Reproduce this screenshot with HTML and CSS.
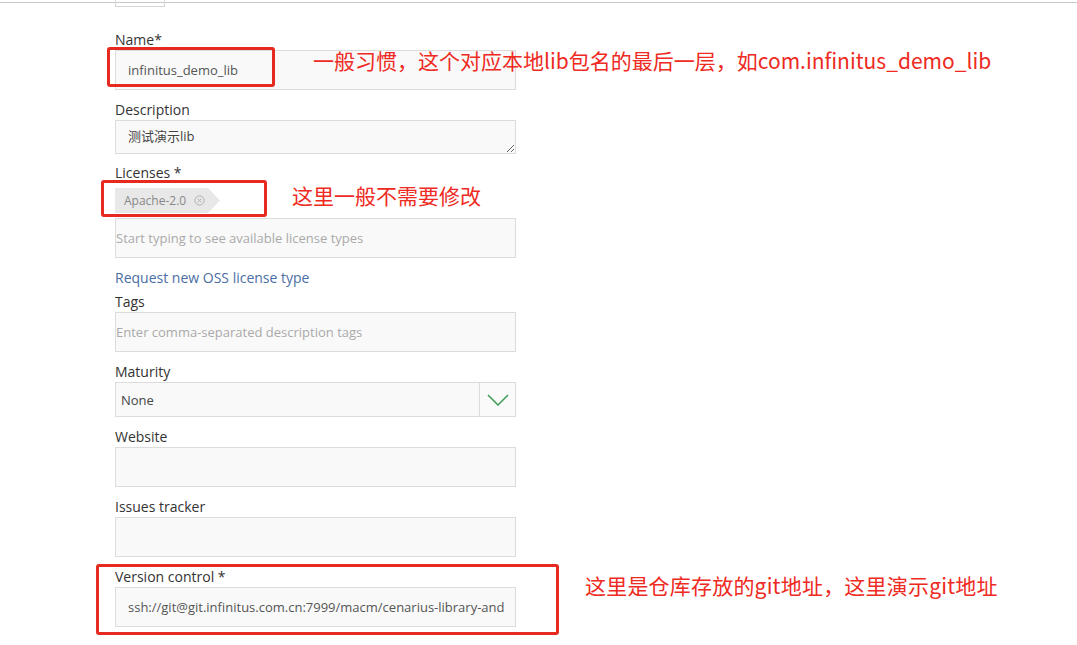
FILE: index.html
```html
<!DOCTYPE html>
<html lang="zh-CN">
<head>
<meta charset="utf-8">
<title>Create package</title>
<link rel="stylesheet" href="styles.css">
</head>
<body>
<div class="page">
  <div class="top"><div class="stub"></div></div>
  <form class="form">
    <div class="field">
      <label class="label">Name*</label>
      <div class="input input-text">infinitus_demo_lib</div>
    </div>
    <div class="field field-desc">
      <label class="label">Description</label>
      <textarea class="textarea" readonly>测试演示lib</textarea>
    </div>
    <div class="field field-lic">
      <label class="label">Licenses *</label>
      <div class="chip">Apache-2.0<span class="chip-x">
        <svg width="11" height="11" viewBox="0 0 11 11"><circle cx="5.5" cy="5.5" r="4.6" fill="none" stroke="#b0b0b0" stroke-width="1"/><path d="M3.6 3.6 L7.4 7.4 M7.4 3.6 L3.6 7.4" stroke="#b0b0b0" stroke-width="1"/></svg>
      </span></div>
      <div class="input input-ph flush">Start typing to see available license types</div>
      <a class="link" href="#">Request new OSS license type</a>
    </div>
    <div class="field">
      <label class="label">Tags</label>
      <div class="input input-ph flush1">Enter comma-separated description tags</div>
    </div>
    <div class="field">
      <label class="label">Maturity</label>
      <div class="select">
        <span class="select-val">None</span>
        <span class="select-btn">
          <svg width="22" height="12" viewBox="0 0 22 12"><path d="M1 1 L11 11 L21 1" fill="none" stroke="#3f9a55" stroke-width="1.5"/></svg>
        </span>
      </div>
    </div>
    <div class="field">
      <label class="label">Website</label>
      <div class="input"></div>
    </div>
    <div class="field">
      <label class="label">Issues tracker</label>
      <div class="input"></div>
    </div>
    <div class="field">
      <label class="label">Version control *</label>
      <div class="input input-text">ssh://git@git.infinitus.com.cn:7999/macm/cenarius-library-and</div>
    </div>
  </form>

  <div class="mark mark-1"></div>
  <div class="mark mark-2"></div>
  <div class="mark mark-3"></div>
  <div class="note note-1">一般习惯，这个对应本地lib包名的最后一层，如com.infinitus_demo_lib</div>
  <div class="note note-2">这里一般不需要修改</div>
  <div class="note note-3">这里是仓库存放的git地址，这里演示git地址</div>
</div>
</body>
</html>
```

FILE: styles.css
```css
* { box-sizing: border-box; }
html, body {
  margin: 0;
  padding: 0;
  background: #ffffff;
}
body {
  font-family: "Open Sans", "Noto Sans CJK SC", sans-serif;
  color: #333333;
  width: 1077px;
  height: 645px;
  overflow: hidden;
}
.page {
  position: relative;
  width: 1077px;
  height: 645px;
}
.top {
  height: 7px;
  background: linear-gradient(#ffffff 0, #ffffff 2px, #c9c9c9 2px, #c9c9c9 3px, #ffffff 3px);
}
.stub {
  margin-left: 115px;
  width: 50px;
  height: 7px;
  border: 1px solid #d6d6d6;
  border-top: none;
  background: transparent;
}
.form {
  margin: 23px 0 0 115px;
  width: 401px;
  display: flex;
  flex-direction: column;
  gap: 10px;
}
.field {
  display: flex;
  flex-direction: column;
}
.field-desc { margin-bottom: -1px; }
.label {
  display: block;
  height: 20px;
  line-height: 20px;
  font-size: 14px;
  color: #333;
}
.input {
  height: 40px;
  background: #f9f9f9;
  border: 1px solid #dcdcdc;
  font-size: 13px;
  line-height: 38px;
  padding-left: 12px;
  white-space: nowrap;
  overflow: hidden;
}
.input-text { color: #555; }
.input-ph { color: #aaaaaa; }
.flush { padding-left: 0; }
.flush1 { padding-left: 0; }
.textarea {
  display: block;
  width: 401px;
  height: 34px;
  background: #f9f9f9;
  border: 1px solid #dcdcdc;
  font-family: "Open Sans", "Noto Sans CJK SC", sans-serif;
  font-size: 13px;
  color: #444;
  padding: 5px 12px;
  line-height: 20px;
  resize: vertical;
  margin: 0;
  outline: none;
}
.chip {
  margin-top: 5px;
  margin-bottom: 5px;
  width: 105px;
  height: 25px;
  line-height: 25px;
  background: #e8e8e8;
  color: #888;
  font-size: 12px;
  padding-left: 9px;
  clip-path: polygon(0 0, 93px 0, 105px 50%, 93px 100%, 0 100%);
  display: flex;
  align-items: center;
  gap: 8px;
}
.chip-x { display: flex; align-items: center; }
.link {
  display: block;
  margin-top: 10px;
  height: 20px;
  line-height: 20px;
  font-size: 14px;
  color: #4a6ea3;
  text-decoration: none;
  margin-bottom: -6px;
}
.select {
  height: 35px;
  display: flex;
  background: #f9f9f9;
  border: 1px solid #dcdcdc;
}
.select-val {
  flex: 1;
  padding-left: 5px;
  line-height: 35px;
  font-size: 13px;
  color: #444;
}
.select-btn {
  width: 36px;
  border-left: 1px solid #dcdcdc;
  display: flex;
  align-items: center;
  justify-content: center;
  background: #fafafa;
}
.mark {
  position: absolute;
  border: 3px solid #e62a22;
  border-radius: 3px;
}
.mark-1 { left: 107px; top: 47px; width: 168px; height: 40px; }
.mark-2 { left: 101px; top: 180px; width: 166px; height: 37px; }
.mark-3 { left: 96px; top: 564px; width: 463px; height: 71px; }
.note {
  position: absolute;
  font-family: "Noto Sans CJK SC", "Microsoft YaHei", sans-serif;
  font-size: 21px;
  line-height: 28px;
  color: #ee2a22;
  white-space: nowrap;
}
.note-1 { left: 313px; top: 46px; }
.note-2 { left: 292px; top: 181px; }
.note-3 { left: 585px; top: 571px; letter-spacing: 0.2px; }
```
